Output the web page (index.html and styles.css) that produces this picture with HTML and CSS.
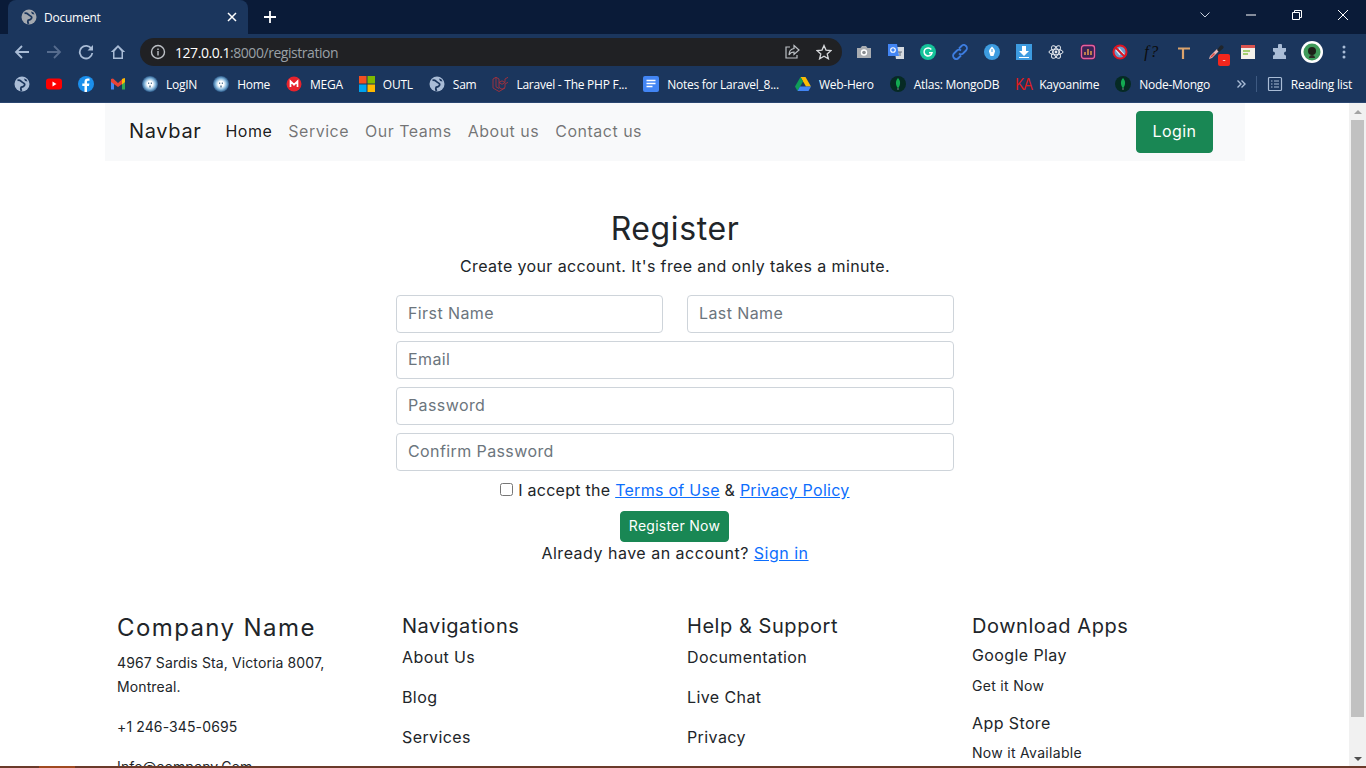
FILE: index.html
```html
<!DOCTYPE html>
<html lang="en">
<head>
    <meta charset="UTF-8">
    <meta name="viewport" content="width=device-width, initial-scale=1.0">
    <title>Document</title>
    <link rel="stylesheet" href="styles.css">
</head>
<body>
    <svg class="defs" width="0" height="0">
        <defs>
            <radialGradient id="halo">
                <stop offset="0.35" stop-color="#fff"/>
                <stop offset="0.7" stop-color="#7fb2d8"/>
                <stop offset="1" stop-color="#2c5a8a"/>
            </radialGradient>
        </defs>
        <symbol id="globe" viewBox="0 0 16 16">
            <circle cx="8" cy="8" r="7.500" fill="currentColor"/>
            <path d="M3.500 4.500C6 3 7 6 9.500 7c2.500 1 .5 4-1.500 4-1.500 0-1.500 2-.5 4" fill="none" stroke="#1b365d" stroke-width="1.800"/>
            <path d="M10 2.500l2.500 1 1 2-2.500-.5z" fill="#1b365d"/>
        </symbol>
        <symbol id="shield" viewBox="0 0 16 16">
            <circle cx="8" cy="8" r="8" fill="url(#halo)"/>
            <path d="M6 6.500h1.200v1.500H6zM8.800 6.500H10v1.500H8.800zM7.200 9.500h1.600v2H7.200z" fill="#5c7f9c"/>
        </symbol>
        <symbol id="leaf" viewBox="0 0 16 16">
            <circle cx="8" cy="8" r="8" fill="#062a24"/>
            <path d="M8 2c2.500 2.500 3 6.500 0 10.500C5 8.500 5.500 4.500 8 2z" fill="#13aa52"/>
            <path d="M7.700 12h.6v2h-.6z" fill="#b8c4c2"/>
        </symbol>
    </svg>

    <div class="shell">
        <header class="browser">
            <div class="tabstrip">
                <div class="tab">
                    <svg class="ico tab-globe"><use href="#globe"/></svg>
                    <span class="tab-title">Document</span>
                    <svg class="ico-sm" viewBox="0 0 10 10"><path d="M1 1l8 8M9 1l-8 8" stroke="#fff" stroke-width="1.500"/></svg>
                </div>
                <svg class="newtab" viewBox="0 0 12 12"><path d="M6 0v12M0 6h12" stroke="#fff" stroke-width="1.800"/></svg>
                <div class="winctl">
                    <div class="winbtn"><svg class="ico-sm" viewBox="0 0 10 6"><path d="M.5.500 5 5 9.500.500" fill="none" stroke="#c9d1dc"/></svg></div>
                    <div class="winbtn"><svg class="ico-sm" viewBox="0 0 10 10"><path d="M0 5h10" stroke="#fff"/></svg></div>
                    <div class="winbtn"><svg class="ico-sm" viewBox="0 0 10 10"><path d="M.5 2.500h7v7h-7zM2.500 2.500v-2h7v7h-2" fill="none" stroke="#fff"/></svg></div>
                    <div class="winbtn"><svg class="ico-sm" viewBox="0 0 10 10"><path d="M0 0l10 10M10 0L0 10" stroke="#fff"/></svg></div>
                </div>
            </div>

            <div class="toolbar">
                <div class="tb-btn"><svg class="ico" viewBox="0 0 16 16"><path d="M15 8H2M8 2 2 8l6 6" fill="none" stroke="#a9bcd6" stroke-width="1.800"/></svg></div>
                <div class="tb-btn"><svg class="ico" viewBox="0 0 16 16"><path d="M1 8h13M8 2l6 6-6 6" fill="none" stroke="#566c8e" stroke-width="1.800"/></svg></div>
                <div class="tb-btn"><svg class="ico" viewBox="0 0 16 16"><path d="M13.500 5A6.300 6.300 0 1 0 14.300 9" fill="none" stroke="#a9bcd6" stroke-width="1.800"/><path d="M15 1v5.500H9.500z" fill="#a9bcd6"/></svg></div>
                <div class="tb-btn"><svg class="ico" viewBox="0 0 16 16"><path d="M8 1 .8 8H3v7h10V8h2.200zM4.500 7.500 8 3.500l3.500 4v6h-7z" fill="#a9bcd6" fill-rule="evenodd"/></svg></div>

                <div class="urlbar">
                    <svg class="ico" viewBox="0 0 16 16"><circle cx="8" cy="8" r="6.500" fill="none" stroke="#bdc1c6" stroke-width="1.400"/><path d="M7.300 7h1.400v4.500H7.300zM7.300 4.500h1.400V6H7.300z" fill="#bdc1c6"/></svg>
                    <span class="url"><b>127.0.0.1</b>:8000/registration</span>
                    <svg class="ico url-share" viewBox="0 0 16 16"><path d="M6 3H2v11h11v-3" fill="none" stroke="#bdc1c6" stroke-width="1.200"/><path d="M10 1.500 15 6l-5 4.500V8C7.500 8 6 9 5 11c0-3.500 2-6 5-6.500z" fill="none" stroke="#bdc1c6" stroke-width="1.200"/></svg>
                    <svg class="ico url-star" viewBox="0 0 16 16"><path d="m8 1.500 2 4.600 5 .5-3.800 3.300 1.200 4.900L8 12.200l-4.400 2.600 1.200-4.900L1 6.600l5-.5z" fill="none" stroke="#d5d7da" stroke-width="1.300"/></svg>
                </div>

                <div class="tb-btn"><svg class="ico" viewBox="0 0 16 16"><path d="M1 4h3.500L6 2h4l1.500 2H15v10H1z" fill="#a8acb1"/><circle cx="8" cy="8.500" r="3.200" fill="#fff"/><circle cx="8" cy="8.500" r="1.800" fill="#8a8d91"/></svg></div>
                <div class="tb-btn"><svg class="ico" viewBox="0 0 16 16"><path d="M6 3h10v12H8z" fill="#d5dae0"/><path d="M0 0h9l2 12H0z" fill="#4285f4"/><circle cx="5" cy="6" r="2.300" fill="none" stroke="#fff" stroke-width="1.100"/><path d="M10 8h4M12 8v4" stroke="#66707c"/></svg></div>
                <div class="tb-btn"><svg class="ico" viewBox="0 0 16 16"><circle cx="8" cy="8" r="8" fill="#15c39a"/><path d="M11.300 5.500A4 4 0 1 0 12 8.800H9" fill="none" stroke="#fff" stroke-width="1.500"/></svg></div>
                <div class="tb-btn"><svg class="ico" viewBox="0 0 16 16"><path d="M7 4.500 9.500 2A3 3 0 0 1 14 6.500L11 9.500a3 3 0 0 1-4 0M9 11.500 6.500 14A3 3 0 0 1 2 9.500L5 6.500a3 3 0 0 1 4 0" fill="none" stroke="#3d7de0" stroke-width="1.800"/></svg></div>
                <div class="tb-btn"><svg class="ico" viewBox="0 0 16 16"><circle cx="8" cy="8" r="8" fill="#3d9ce0"/><path d="M8 2.500c2 2 3 3.500 3 5L9.500 12h-3L5 7.500c0-1.500 1-3 3-5z" fill="#fff"/><path d="M8 5v3" stroke="#3d9ce0"/></svg></div>
                <div class="tb-btn"><svg class="ico" viewBox="0 0 16 16"><rect width="16" height="16" fill="#3d9be0"/><path d="M6 2h4v5h3l-5 5-5-5h3z" fill="#fff"/><path d="M3 13.500h10" stroke="#fff"/></svg></div>
                <div class="tb-btn"><svg class="ico" viewBox="0 0 16 16"><g fill="none" stroke="#e4e8ee"><ellipse cx="8" cy="8" rx="7" ry="2.800"/><ellipse cx="8" cy="8" rx="7" ry="2.800" transform="rotate(60 8 8)"/><ellipse cx="8" cy="8" rx="7" ry="2.800" transform="rotate(120 8 8)"/></g><circle cx="8" cy="8" r="1.400" fill="#e4e8ee"/></svg></div>
                <div class="tb-btn"><svg class="ico" viewBox="0 0 16 16"><rect width="16" height="16" rx="3" fill="#3a2356"/><rect x="1.500" y="1.500" width="13" height="13" rx="2.500" fill="none" stroke="#e8609c" stroke-width="1.300"/><path d="M5 11V8M8 11V5M11 11V7" stroke="#f2a64b" stroke-width="1.400"/></svg></div>
                <div class="tb-btn"><svg class="ico" viewBox="0 0 16 16"><circle cx="8" cy="8" r="6.500" fill="#6f9ccb" stroke="#e01421" stroke-width="2"/><path d="M4 6l4 5M7 4.500l5 6" stroke="#dfe6ee" stroke-width="1.300"/><path d="M3.500 3.500l9 9" stroke="#e01421" stroke-width="1.800"/></svg></div>
                <div class="tb-btn"><span class="fq">f?</span></div>
                <div class="tb-btn"><svg class="ico" viewBox="0 0 16 16"><path d="M2 4.500h12M7 4.500V15" fill="none" stroke="#dba36c" stroke-width="2.200"/></svg></div>
                <div class="tb-btn">
                    <svg class="ico" viewBox="0 0 16 16"><path d="M1 15l1-3 7-7 2 2-7 7z" fill="#e8b8b8"/><path d="M2 14l1-2 3-3 1 1-3 3z" fill="#d9423a"/><path d="M9 6l3-4a1.800 1.800 0 0 1 3 2.500L11 8z" fill="#20252b"/></svg>
                    <span class="badge">-</span>
                </div>
                <div class="tb-btn"><svg class="ico" viewBox="0 0 16 16"><rect x="1" y="1" width="14" height="14" fill="#f4f1ea"/><path d="M1 1h14v3H1z" fill="#d9534f"/><path d="M3 7h7M3 10h5" stroke="#8bc34a" stroke-width="1.500"/></svg></div>
                <div class="tb-btn"><svg class="ico" viewBox="0 0 16 16"><path d="M6 1.500a2 2 0 0 1 4 0V4h4v3.500a2 2 0 0 0 0 4V15H1v-3.500a2 2 0 0 0 0-4V4h5z" fill="#a9bcd6"/></svg></div>
                <div class="tb-btn">
                    <svg class="avatar" viewBox="0 0 22 22"><circle cx="11" cy="11" r="11" fill="#fff"/><circle cx="11" cy="11" r="8.500" fill="#3f9a5a"/><circle cx="11" cy="10" r="4" fill="#1d2018"/><path d="M8 17c0-4 6-4 6 0z" fill="#2a2a22"/></svg>
                </div>
                <div class="tb-btn"><svg class="ico" viewBox="0 0 16 16"><circle cx="8" cy="3" r="1.500" fill="#a9bcd6"/><circle cx="8" cy="8" r="1.500" fill="#a9bcd6"/><circle cx="8" cy="13" r="1.500" fill="#a9bcd6"/></svg></div>
            </div>

            <nav class="bookmarks">
                <a class="bm"><svg class="ico bm-globe"><use href="#globe"/></svg></a>
                <a class="bm"><svg class="ico" viewBox="0 0 16 16"><rect y="2.500" width="16" height="11" rx="3" fill="#f00"/><path d="m6.500 5.500 4 2.500-4 2.500z" fill="#fff"/></svg></a>
                <a class="bm"><svg class="ico" viewBox="0 0 16 16"><circle cx="8" cy="8" r="8" fill="#1b8fec"/><path d="M9 16v-6h2l.4-2.500H9V6c0-.8.4-1.300 1.300-1.300h1.200V2.600C11 2.500 10.400 2.400 9.800 2.400 7.800 2.400 6.500 3.600 6.500 5.700v1.800H4.300V10h2.200v6z" fill="#fff"/></svg></a>
                <a class="bm"><svg class="ico" viewBox="0 0 16 16"><path d="M1 3v10.500h3V7z" fill="#4285f4"/><path d="M15 3v10.500h-3V7z" fill="#34a853"/><path d="M1 3l2-.5L8 7l5-4.500 2 .5v3L8 11 1 6z" fill="#ea4335"/><path d="M12 2.900 15 2v4l-3 2.500z" fill="#fbbc04"/></svg></a>
                <a class="bm"><svg class="ico"><use href="#shield"/></svg><span>LogIN</span></a>
                <a class="bm"><svg class="ico"><use href="#shield"/></svg><span>Home</span></a>
                <a class="bm"><svg class="ico" viewBox="0 0 16 16"><circle cx="8" cy="8" r="7.500" fill="#e8232c"/><path d="M4.500 11V5.200L8 8.700l3.500-3.500V11" fill="none" stroke="#fff" stroke-width="1.700"/></svg><span>MEGA</span></a>
                <a class="bm"><svg class="ico" viewBox="0 0 16 16"><path d="M0 0h7.500v7.500H0z" fill="#f25022"/><path d="M8.500 0H16v7.500H8.500z" fill="#7fba00"/><path d="M0 8.500h7.500V16H0z" fill="#00a4ef"/><path d="M8.500 8.500H16V16H8.500z" fill="#ffb900"/></svg><span>OUTL</span></a>
                <a class="bm"><svg class="ico bm-globe"><use href="#globe"/></svg><span>Sam</span></a>
                <a class="bm"><svg class="ico" viewBox="0 0 16 16"><path d="M1 3l3-1.700L7 3v8.500l3 1.700 3-1.700V8L16 6.300M7 6.500l3-1.700 3 1.700L10 8.300 7 6.500zM1 3v9l6 3.500 6-3.500M4 1.300v9.500l3 1.700M13 6.500V3l3-1.700" fill="none" stroke="#a8313c" stroke-width=".9"/></svg><span>Laravel - The PHP F...</span></a>
                <a class="bm"><svg class="ico" viewBox="0 0 16 16"><rect width="16" height="16" rx="2" fill="#4285f4"/><path d="M3.500 4.500h9M3.500 7.500h9M3.500 10.500h6" stroke="#fff" stroke-width="1.500"/></svg><span>Notes for Laravel_8...</span></a>
                <a class="bm"><svg class="ico" viewBox="0 0 16 16"><path d="M5.500 1h5L16 10.500h-5z" fill="#fbbc04"/><path d="M5.500 1 0 10.500 2.500 15l5.500-9.500z" fill="#0f9d58"/><path d="M2.500 15h11l2.500-4.500H5z" fill="#4285f4"/></svg><span>Web-Hero</span></a>
                <a class="bm"><svg class="ico"><use href="#leaf"/></svg><span>Atlas: MongoDB</span></a>
                <a class="bm"><span class="ka">KA</span><span>Kayoanime</span></a>
                <a class="bm"><svg class="ico"><use href="#leaf"/></svg><span>Node-Mongo</span></a>
                <div class="bm-end">
                    <svg class="chev" viewBox="0 0 9 8"><path d="M.5.500 4 4 .5 7.500M4.500.500 8 4 4.500 7.500" fill="none" stroke="#a9bcd6" stroke-width="1.400"/></svg>
                    <i class="bm-sep"></i>
                    <a class="bm"><svg class="ico" viewBox="0 0 16 16"><rect x="1.500" y="1.500" width="13" height="13" rx="1" fill="none" stroke="#a9bcd6" stroke-width="1.200"/><path d="M4 5h1.500M4 8h1.500M4 11h1.500M7 5h5M7 8h5M7 11h5" stroke="#a9bcd6" stroke-width="1.200"/></svg><span>Reading list</span></a>
                </div>
            </nav>
        </header>

        <div class="viewport">
            <div class="page">
                <div class="container">
                    <nav class="navbar">
                        <a class="brand">Navbar</a>
                        <ul class="nav-links">
                            <li class="active">Home</li>
                            <li>Service</li>
                            <li>Our Teams</li>
                            <li>About us</li>
                            <li>Contact us</li>
                        </ul>
                        <button class="btn btn-login">Login</button>
                    </nav>

                    <main class="register">
                        <h2>Register</h2>
                        <p class="lead">Create your account. It's free and only takes a minute.</p>
                        <form class="form">
                            <div class="row-2">
                                <input type="text" placeholder="First Name">
                                <input type="text" placeholder="Last Name">
                            </div>
                            <input type="email" placeholder="Email">
                            <input type="password" placeholder="Password">
                            <input type="password" placeholder="Confirm Password">
                            <label class="terms"><input type="checkbox"> I accept the <a href="#">Terms of Use</a> &amp; <a href="#">Privacy Policy</a></label>
                            <button class="btn btn-sm" type="button">Register Now</button>
                            <p class="signin">Already have an account? <a href="#">Sign in</a></p>
                        </form>
                    </main>

                    <footer class="footer">
                        <div class="col">
                            <h3>Company Name</h3>
                            <p class="small">4967 Sardis Sta, Victoria 8007, Montreal.</p>
                            <p class="small">+1 246-345-0695</p>
                            <p class="small">Info@company.Com</p>
                        </div>
                        <div class="col">
                            <h4>Navigations</h4>
                            <ul class="links">
                                <li>About Us</li>
                                <li>Blog</li>
                                <li>Services</li>
                            </ul>
                        </div>
                        <div class="col">
                            <h4>Help &amp; Support</h4>
                            <ul class="links">
                                <li>Documentation</li>
                                <li>Live Chat</li>
                                <li>Privacy</li>
                            </ul>
                        </div>
                        <div class="col">
                            <h4>Download Apps</h4>
                            <div class="app">
                                <h5>Google Play</h5>
                                <span>Get it Now</span>
                            </div>
                            <div class="app">
                                <h5>App Store</h5>
                                <span>Now it Available</span>
                            </div>
                        </div>
                    </footer>
                </div>
            </div>
            <div class="scrollbar">
                <i class="arrow-up"></i>
                <div class="thumb"></div>
                <i class="arrow-down"></i>
            </div>
        </div>

        <div class="taskbar-edge"><i></i></div>
    </div>
</body>
</html>
```

FILE: styles.css
```css
* {
    box-sizing: border-box;
}

html, body {
    margin: 0;
    padding: 0;
    height: 100%;
    overflow: hidden;
}

body {
    font-family: 'Inter', 'Liberation Sans', sans-serif;
    color: #212529;
    background-color: #fff;
}

.defs {
    position: absolute;
}

.shell {
    width: 1366px;
    height: 768px;
    display: flex;
    flex-direction: column;
}

/* browser frame */
.browser {
    flex: none;
    background-color: #1b365d;
    color: #fff;
    font-family: 'Open Sans', 'Noto Sans', sans-serif;
    font-size: 12px;
    letter-spacing: -0.25px;
    border-bottom: 1px solid #2a4670;
}

.ico {
    width: 16px;
    height: 16px;
    flex: none;
    display: block;
}

.ico-sm {
    width: 10px;
    height: 10px;
    display: block;
}

.tabstrip {
    height: 34px;
    display: flex;
    align-items: center;
    background-color: #0a1b38;
}

.tab {
    width: 240px;
    height: 34px;
    margin-left: 8px;
    padding: 0 11px 0 13px;
    display: flex;
    align-items: center;
    background-color: #1b365d;
    border-radius: 8px 8px 0 0;
}

.tab-globe {
    color: #a4a9b0;
}

.tab-title {
    flex: 1;
    margin-left: 7px;
}

.newtab {
    width: 12px;
    height: 12px;
    margin-left: 16px;
}

.winctl {
    margin-left: auto;
    display: flex;
}

.winbtn {
    width: 46px;
    height: 30px;
    margin-top: -4px;
    display: flex;
    align-items: center;
    justify-content: center;
}

.toolbar {
    height: 34px;
    padding: 2px 6px 0;
    display: flex;
    align-items: center;
}

.tb-btn {
    width: 32px;
    height: 28px;
    flex: none;
    display: flex;
    align-items: center;
    justify-content: center;
    position: relative;
}

.urlbar {
    flex: 1;
    height: 28px;
    margin: 0 6px;
    padding: 0 10px;
    display: flex;
    align-items: center;
    background-color: #202124;
    border-radius: 14px;
}

.url {
    flex: 1;
    margin-left: 9px;
    font-size: 14px;
    letter-spacing: -0.45px;
    color: #9aa0a6;
}

.url b {
    font-weight: 400;
    color: #fff;
}

.url-share {
    margin-right: 16px;
}

.fq {
    font-family: 'Liberation Serif', serif;
    font-style: italic;
    font-size: 16px;
    letter-spacing: 1.500px;
    color: #0c0c0c;
}

.badge {
    position: absolute;
    left: 18px;
    top: 16px;
    width: 12px;
    height: 12px;
    border-radius: 2px;
    background-color: #f4261c;
    font-size: 9px;
    line-height: 11px;
    text-align: center;
}

.avatar {
    width: 22px;
    height: 22px;
}

.bookmarks {
    height: 34px;
    padding: 0 14px 2px;
    display: flex;
    align-items: center;
    gap: 16px;
}

.bm {
    display: flex;
    align-items: center;
    gap: 8px;
    white-space: nowrap;
    color: #fff;
}

.bm-globe {
    color: #a9bcd6;
}

.ka {
    display: inline-block;
    width: 16px;
    color: #e01c1c;
    font-family: 'Liberation Sans', sans-serif;
    font-size: 14px;
    letter-spacing: -1px;
    transform: scaleY(1.2);
}

.bm-end {
    margin-left: auto;
    display: flex;
    align-items: center;
}

.chev {
    width: 9px;
    height: 8px;
}

.bm-sep {
    width: 1px;
    height: 16px;
    margin: 0 10px;
    background-color: #3e5a82;
}

/* page */
.viewport {
    flex: 1;
    min-height: 0;
    display: flex;
}

.page {
    flex: 1;
    min-width: 0;
    overflow: hidden;
}

.container {
    width: 1140px;
    margin-left: 105px;
}

.scrollbar {
    width: 17px;
    flex: none;
    padding-left: 2px;
    display: flex;
    flex-direction: column;
    align-items: flex-start;
    background-color: #f1f1f1;
}

.thumb {
    width: 13px;
    height: 597px;
    margin-top: 4px;
    background-color: #c1c1c1;
}

.arrow-up, .arrow-down {
    width: 0;
    height: 0;
    margin-left: 2.500px;
    border-left: 4px solid transparent;
    border-right: 4px solid transparent;
}

.arrow-up {
    margin-top: 7px;
    margin-bottom: 2px;
    border-bottom: 4px solid #a3a3a3;
}

.arrow-down {
    margin-top: 40px;
    border-top: 4px solid #505050;
}

.navbar {
    height: 58px;
    padding: 0 32px 0 24px;
    display: flex;
    align-items: center;
    background-color: #f8f9fa;
}

.brand {
    margin-bottom: 2px;
    font-size: 20px;
    letter-spacing: 0.65px;
    color: rgba(0, 0, 0, 0.9);
}

.nav-links {
    list-style: none;
    margin: 0 0 2px 16px;
    padding: 0;
    display: flex;
    flex: 1;
    letter-spacing: 0.5px;
    color: rgba(0, 0, 0, 0.55);
}

.nav-links li {
    padding: 0 8px;
}

.nav-links .active {
    color: rgba(0, 0, 0, 0.9);
}

.btn {
    font-family: inherit;
    background-color: #198754;
    color: #fff;
    border: 1px solid #198754;
    border-radius: 4px;
    padding: 0 0 2px;
    cursor: pointer;
}

.btn-login {
    width: 77px;
    height: 42px;
    font-size: 16px;
    letter-spacing: 0.4px;
}

.btn-sm {
    width: 109px;
    height: 31px;
    margin: 8px 1px 0 0;
    font-size: 14px;
    letter-spacing: 0.25px;
}

.register {
    padding-top: 48px;
    text-align: center;
}

.register h2 {
    margin: 0 0 8px;
    padding-top: 1px;
    font-size: 32px;
    line-height: 37px;
    font-weight: 400;
    letter-spacing: 0.6px;
}

.lead {
    margin: 0 0 16px;
    line-height: 22px;
    padding-bottom: 2px;
    letter-spacing: 0.38px;
}

.form {
    width: 558px;
    margin: 0 auto;
    display: flex;
    flex-direction: column;
    align-items: center;
}

.form > input {
    margin-bottom: 8px;
}

.row-2 {
    width: 100%;
    display: flex;
    gap: 24px;
    margin-bottom: 8px;
}

.form input:not([type="checkbox"]) {
    width: 100%;
    height: 38px;
    padding: 0 11px 2px;
    font: inherit;
    font-size: 16px;
    letter-spacing: 0.4px;
    border: 1px solid #ced4da;
    border-radius: 4px;
    background-color: #fff;
}

.form input::placeholder {
    color: #6c757d;
}

.terms {
    line-height: 22px;
    padding-bottom: 2px;
    letter-spacing: 0.27px;
}

.terms input {
    width: 13px;
    height: 13px;
    margin: 0;
}

a {
    color: #0d6efd;
}

.signin {
    margin: 0;
    line-height: 22px;
    padding-bottom: 2px;
    letter-spacing: 0.5px;
}

.footer {
    margin-top: 48px;
    display: grid;
    grid-template-columns: repeat(4, 285px);
}

.col {
    padding: 0 12px;
}

.col h3 {
    margin: -1px 0 9px;
    font-size: 24px;
    line-height: 29px;
    font-weight: 400;
    letter-spacing: 1.4px;
}

.col h4 {
    margin: 0 0 7px;
    font-size: 20px;
    line-height: 24px;
    font-weight: 400;
    letter-spacing: 0.55px;
}

.small {
    margin: 0 0 16px;
    font-size: 14px;
    line-height: 24px;
    letter-spacing: 0.12px;
}

.links {
    list-style: none;
    margin: 0;
    padding: 0;
    line-height: 24px;
    letter-spacing: 0.4px;
}

.links li {
    margin-bottom: 16px;
}

.app {
    padding-top: 1px;
    margin-bottom: 15px;
    font-size: 14px;
    line-height: 24px;
    letter-spacing: 0.3px;
}

.app h5 {
    margin: 0 0 8.500px;
    font-size: 16px;
    line-height: 19px;
    font-weight: 400;
    letter-spacing: 0.4px;
}

.taskbar-edge {
    height: 2px;
    flex: none;
    background-color: #6b3a2a;
    position: relative;
}

.taskbar-edge i {
    position: absolute;
    left: 39px;
    width: 36px;
    height: 2px;
    background-color: #a04a20;
}
```
